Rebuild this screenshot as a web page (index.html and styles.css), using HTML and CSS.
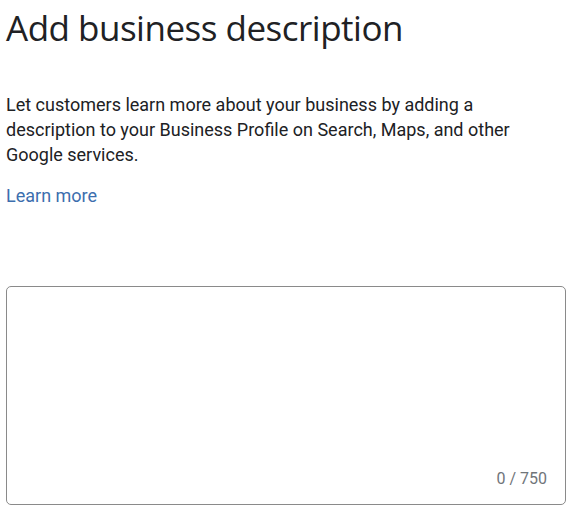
FILE: index.html
```html
<!DOCTYPE html>
<html lang="en">
<head>
<meta charset="utf-8">
<title>Add business description</title>
<link rel="stylesheet" href="styles.css">
</head>
<body>
<main class="page">
  <h1 class="title">Add business description</h1>
  <p class="intro">Let customers learn more about your business by adding a description to your Business Profile on Search, Maps, and other Google services.</p>
  <a class="learn" href="#">Learn more</a>
  <div class="field">
    <textarea class="input" aria-label="Business description"></textarea>
    <span class="count">0 / 750</span>
  </div>
</main>
</body>
</html>
```
FILE: styles.css
```css
html, body {
  margin: 0;
  padding: 0;
  background: #ffffff;
}
.page {
  padding: 0 6px 0 6px;
  display: flex;
  flex-direction: column;
  align-items: flex-start;
}
.title {
  margin: 6px 0 0 0;
  font-family: "Open Sans", sans-serif;
  font-weight: 400;
  font-size: 35px;
  line-height: 44px;
  color: #202124;
  letter-spacing: -0.5px;
}
.intro {
  margin: 42px 0 0 0;
  font-family: Roboto, sans-serif;
  font-size: 18px;
  line-height: 25px;
  color: #202124;
  width: 540px;
}
.learn {
  margin-top: 16px;
  font-family: Roboto, sans-serif;
  font-size: 18px;
  line-height: 25px;
  color: #3c6eae;
  text-decoration: none;
}
.field {
  position: relative;
  margin-top: 78px;
  width: 560px;
  height: 219px;
  box-sizing: border-box;
  border: 1px solid #8a8a8a;
  border-radius: 5px;
}
.input {
  display: block;
  width: 100%;
  height: 100%;
  box-sizing: border-box;
  border: none;
  outline: none;
  resize: none;
  background: transparent;
  padding: 12px 16px 40px 16px;
  font-family: Roboto, sans-serif;
  font-size: 16px;
}
.count {
  position: absolute;
  right: 18px;
  bottom: 16px;
  font-family: Roboto, sans-serif;
  font-size: 16px;
  line-height: 18px;
  color: #70757a;
}
```
